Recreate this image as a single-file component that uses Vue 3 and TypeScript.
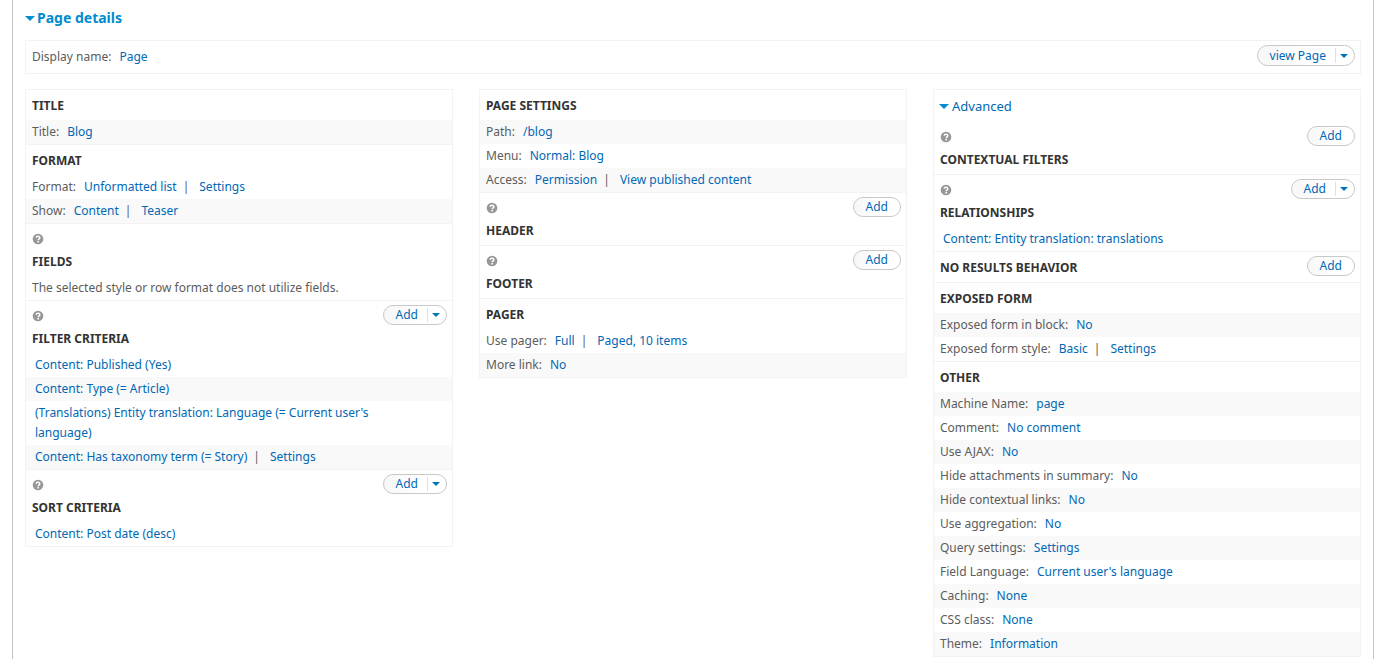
<script setup lang="ts">
interface Row {
  label?: string
  links?: string[]
  text?: string
}

interface Section {
  title: string
  help?: boolean
  action?: 'add' | 'menu'
  stripe?: 'odd' | 'even'
  rows: Row[]
}

interface Column {
  name: string
  collapsible?: boolean
  sections: Section[]
}

const columns: Column[] = [
  {
    name: 'Display',
    sections: [
      { title: 'Title', stripe: 'odd', rows: [{ label: 'Title:', links: ['Blog'] }] },
      {
        title: 'Format',
        stripe: 'even',
        rows: [
          { label: 'Format:', links: ['Unformatted list', 'Settings'] },
          { label: 'Show:', links: ['Content', 'Teaser'] },
        ],
      },
      {
        title: 'Fields',
        help: true,
        rows: [{ text: 'The selected style or row format does not utilize fields.' }],
      },
      {
        title: 'Filter criteria',
        help: true,
        action: 'menu',
        stripe: 'even',
        rows: [
          { links: ['Content: Published (Yes)'] },
          { links: ['Content: Type (= Article)'] },
          { links: ["(Translations) Entity translation: Language (= Current user's language)"] },
          { links: ['Content: Has taxonomy term (= Story)', 'Settings'] },
        ],
      },
      {
        title: 'Sort criteria',
        help: true,
        action: 'menu',
        rows: [{ links: ['Content: Post date (desc)'] }],
      },
    ],
  },
  {
    name: 'Page',
    sections: [
      {
        title: 'Page settings',
        stripe: 'odd',
        rows: [
          { label: 'Path:', links: ['/blog'] },
          { label: 'Menu:', links: ['Normal: Blog'] },
          { label: 'Access:', links: ['Permission', 'View published content'] },
        ],
      },
      { title: 'Header', help: true, action: 'add', rows: [] },
      { title: 'Footer', help: true, action: 'add', rows: [] },
      {
        title: 'Pager',
        stripe: 'even',
        rows: [
          { label: 'Use pager:', links: ['Full', 'Paged, 10 items'] },
          { label: 'More link:', links: ['No'] },
        ],
      },
    ],
  },
  {
    name: 'Advanced',
    collapsible: true,
    sections: [
      { title: 'Contextual filters', help: true, action: 'add', rows: [] },
      {
        title: 'Relationships',
        help: true,
        action: 'menu',
        rows: [{ links: ['Content: Entity translation: translations'] }],
      },
      { title: 'No results behavior', action: 'add', rows: [] },
      {
        title: 'Exposed form',
        stripe: 'odd',
        rows: [
          { label: 'Exposed form in block:', links: ['No'] },
          { label: 'Exposed form style:', links: ['Basic', 'Settings'] },
        ],
      },
      {
        title: 'Other',
        stripe: 'odd',
        rows: [
          { label: 'Machine Name:', links: ['page'] },
          { label: 'Comment:', links: ['No comment'] },
          { label: 'Use AJAX:', links: ['No'] },
          { label: 'Hide attachments in summary:', links: ['No'] },
          { label: 'Hide contextual links:', links: ['No'] },
          { label: 'Use aggregation:', links: ['No'] },
          { label: 'Query settings:', links: ['Settings'] },
          { label: 'Field Language:', links: ["Current user's language"] },
          { label: 'Caching:', links: ['None'] },
          { label: 'CSS class:', links: ['None'] },
          { label: 'Theme:', links: ['Information'] },
        ],
      },
    ],
  },
]
</script>

<template>
  <main class="panel">
    <details open>
      <summary class="page-summary"><span class="arrow"></span>Page details</summary>

      <div class="display-bar">
        <div class="setting"><span class="label">Display name:</span><a href="#">Page</a></div>
        <div class="split tall">
          <button type="button" class="main">view Page</button>
          <button type="button" class="toggle" aria-label="More view actions"><span class="caret"></span></button>
        </div>
      </div>

      <div class="columns">
        <component
          :is="column.collapsible ? 'details' : 'div'"
          v-for="column in columns"
          :key="column.name"
          class="column"
          :open="column.collapsible ? true : undefined"
        >
          <summary v-if="column.collapsible" class="advanced-summary">
            <span class="arrow"></span><a href="#">{{ column.name }}</a>
          </summary>
          <section v-for="section in column.sections" :key="section.title" class="section" :class="section.stripe">
            <header class="head">
              <div class="head-text">
                <svg v-if="section.help" class="help" viewBox="0 0 12 12" role="img" aria-label="Help">
                  <circle cx="6" cy="6" r="5.3" fill="#979797" />
                  <path d="M4.2 4.8C4.2 2.6 7.8 2.6 7.8 4.7C7.8 5.9 6.2 5.8 6.2 7.2" fill="none" stroke="#fff" stroke-width="1.5" />
                  <rect x="5.4" y="8" width="1.6" height="1.5" fill="#fff" />
                </svg>
                <h3>{{ section.title }}</h3>
              </div>
              <div v-if="section.action" class="split">
                <button type="button" class="main">Add</button>
                <button v-if="section.action === 'menu'" type="button" class="toggle" :aria-label="'More ' + section.title + ' actions'">
                  <span class="caret"></span>
                </button>
              </div>
            </header>
            <div v-for="(row, i) in section.rows" :key="i" class="row" :class="{ bare: !row.label && !row.text }">
              <span v-if="row.label" class="label">{{ row.label }}</span>
              <span v-if="row.text">{{ row.text }}</span>
              <template v-for="(link, j) in row.links" :key="link">
                <span v-if="j > 0" class="bar">|</span>
                <a href="#">{{ link }}</a>
              </template>
            </div>
          </section>
        </component>
      </div>
    </details>
  </main>
</template>

<style>
body {
  margin: 0;
  background: #fff;
}
</style>

<style scoped>
.panel {
  box-sizing: border-box;
  min-height: 100vh;
  margin: 0 6px 0 12px;
  padding: 0 12px;
  border: solid #c4c4c4;
  border-width: 0 1px;
  color: #5c5c5c;
  font: 12px/20px "Lucida Grande", "Noto Sans", "Open Sans", sans-serif;
}

a {
  color: #0068b5;
  text-decoration: none;
}

summary {
  display: flex;
  align-items: center;
  list-style: none;
  cursor: pointer;
}

.page-summary {
  height: 36px;
  gap: 2px;
  margin-bottom: 4px;
  color: #008ccf;
  font-size: 14px;
  font-weight: 700;
}

.advanced-summary {
  height: 32px;
  gap: 3px;
  padding: 0 6px 0 5px;
  font-size: 13px;
}

.arrow {
  border: solid transparent;
  border-width: 5px 5px 0;
  border-top-color: #008ccf;
}

.display-bar {
  display: flex;
  justify-content: space-between;
  align-items: flex-start;
  padding: 4px 5px 6px 6px;
  border: 1px solid #f3f3f3;
}

.setting {
  padding-top: 2px;
}

.label {
  margin-right: 8px;
}

.columns {
  display: grid;
  grid-template-columns: repeat(3, minmax(0, 1fr));
  align-items: start;
  gap: 26px;
  margin-top: 15px;
}

.column {
  border: 1px solid #f3f3f3;
}

.section + .section {
  border-top: 1px solid #f3f3f3;
}

.head {
  display: flex;
  justify-content: space-between;
  align-items: flex-start;
  padding: 0 5px 0 6px;
}

.head-text {
  display: flex;
  flex-direction: column;
}

.help {
  width: 12px;
  height: 12px;
  margin: 9px 0 1px;
}

h3 {
  margin: 0;
  padding-top: 2px;
  color: #333;
  font-size: 12px;
  font-weight: 700;
  line-height: 28px;
  text-transform: uppercase;
}

.row {
  padding: 2px 50px 2px 6px;
}

.bare {
  padding-left: 9px;
}

.odd .row:nth-of-type(odd),
.even .row:nth-of-type(even) {
  background: #f9f9f9;
}

.bar {
  margin: 0 10px 0 6px;
}

.split {
  display: flex;
  box-sizing: border-box;
  height: 20px;
  margin-top: 4px;
  border: 1px solid #c8c8c8;
  border-radius: 11px;
  background: linear-gradient(90deg, #f7f7f7, #fff 60%);
}

.tall {
  height: 21px;
  margin-top: 0;
}

button {
  padding: 0;
  border: 0;
  background: none;
  color: #0068b5;
  font: inherit;
  line-height: 18px;
  cursor: pointer;
}

.main {
  padding: 0 12px;
}

.main:not(:last-child) {
  padding-right: 9px;
}

.toggle {
  display: flex;
  align-items: center;
  justify-content: center;
  width: 19px;
  margin: 2px 0;
  border-left: 1px solid #e0e0e0;
}

.caret {
  margin-right: 2px;
  border: solid transparent;
  border-width: 4px 4px 0;
  border-top-color: #0074bd;
}
</style>
